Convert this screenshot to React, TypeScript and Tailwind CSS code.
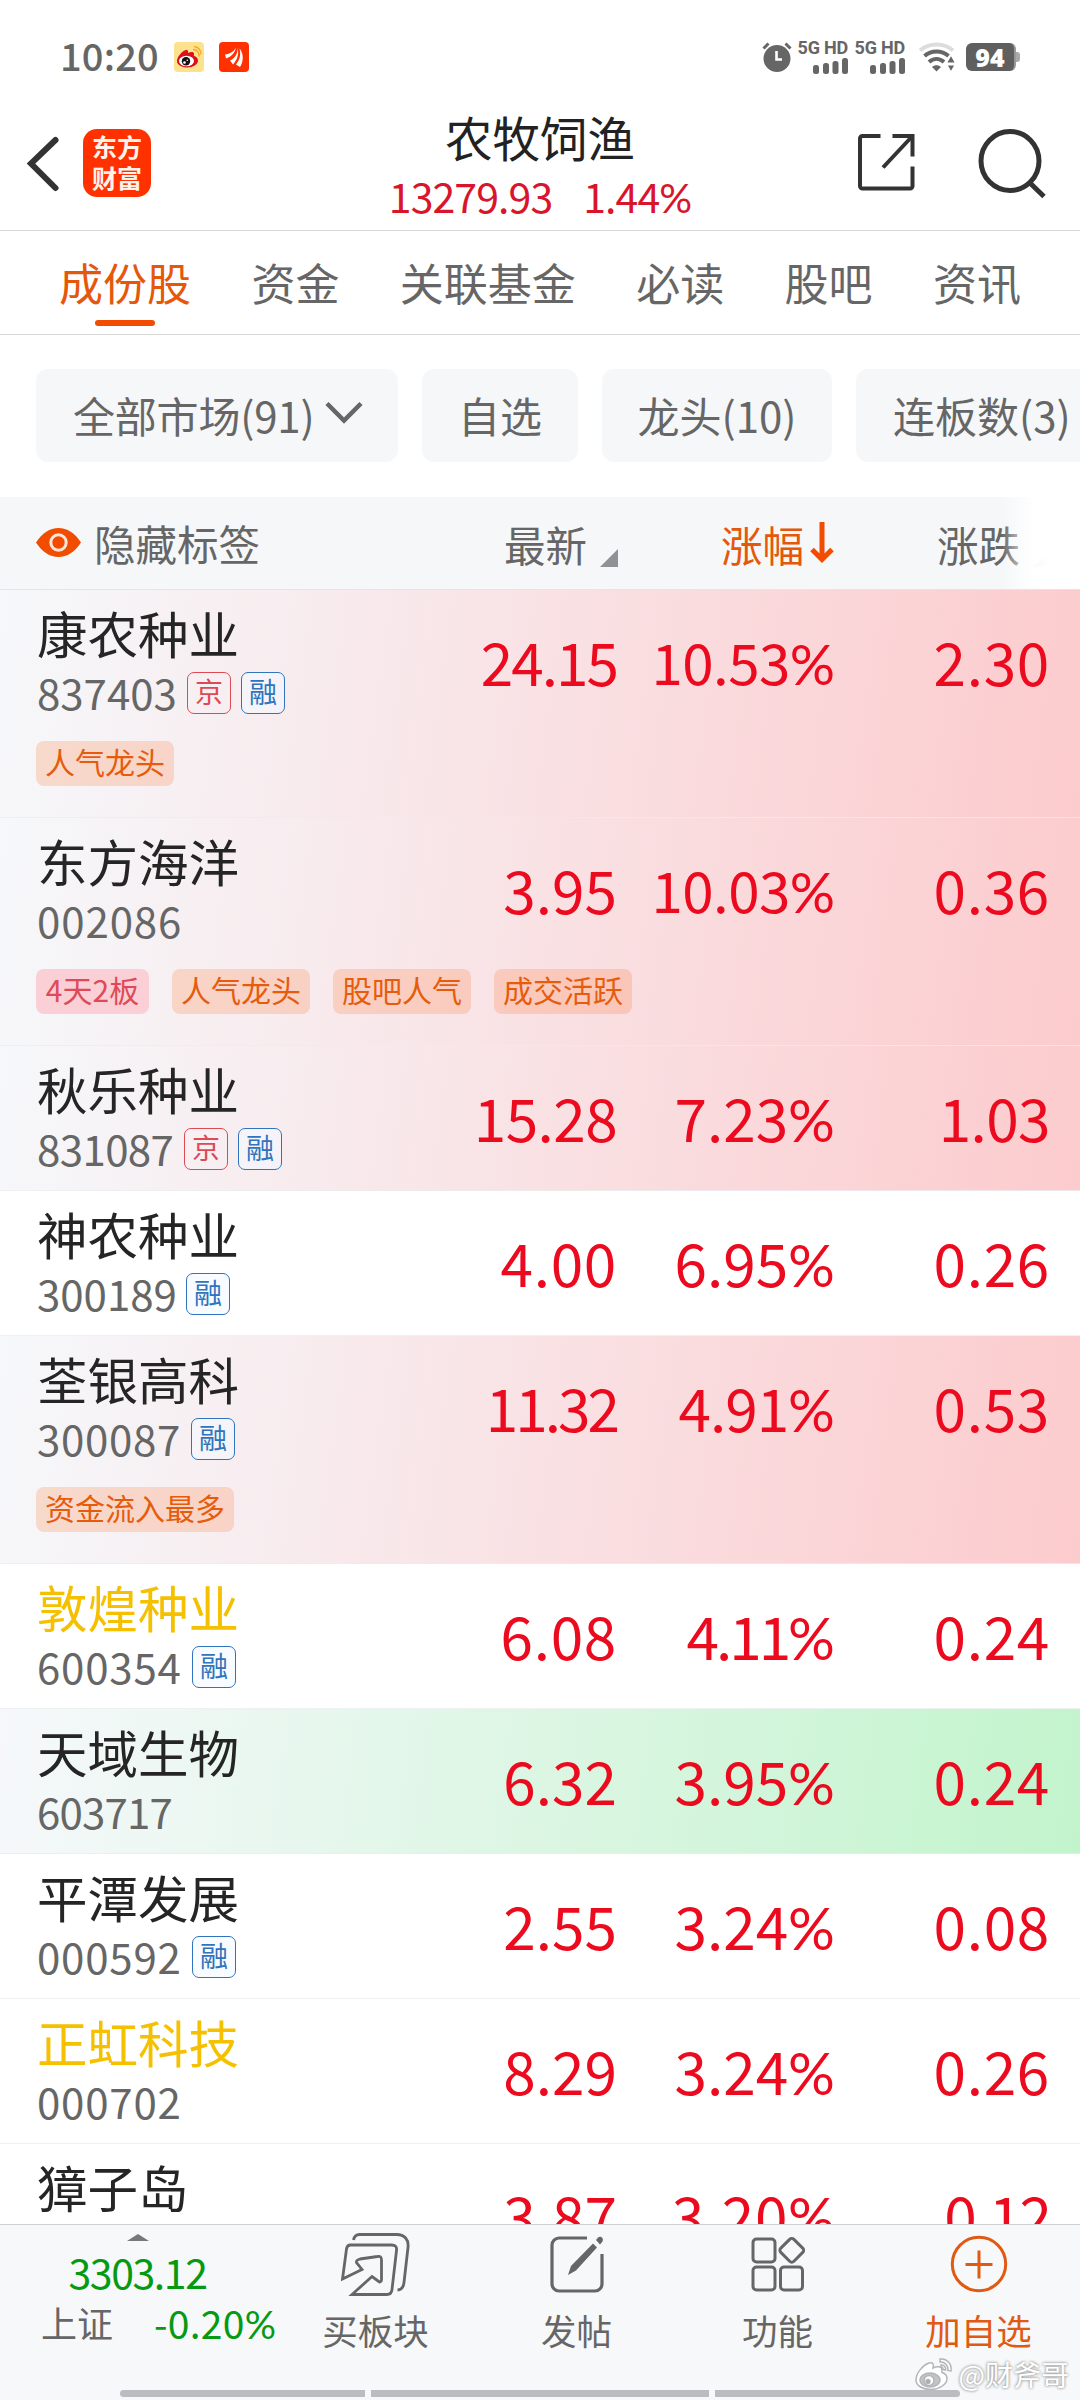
import React from 'react';

type Stock = {
  name: string;
  code: string;
  codeClass: string;
  badges?: string[];
  tags?: string[];
  price: string;
  percent: string;
  change: string;
  bg?: string;
  gold?: boolean;
};

const RED_BG = 'bg-[linear-gradient(98deg,#f6f8fb_0%,#fccbcd_100%)]';
const GREEN_BG = 'bg-[linear-gradient(98deg,#f6f8fb_0%,#c2f4cc_100%)]';

const stocks: Stock[] = [
  { name: '康农种业', code: '837403', codeClass: 'w-[150px]', badges: ['京', '融'], tags: ['人气龙头'], price: '24.15', percent: '10.53', change: '2.30', bg: RED_BG },
  { name: '东方海洋', code: '002086', codeClass: 'w-[150px] tracking-[0.9px]', tags: ['4天2板', '人气龙头', '股吧人气', '成交活跃'], price: '3.95', percent: '10.03', change: '0.36', bg: RED_BG },
  { name: '秋乐种业', code: '831087', codeClass: 'w-[147px] tracking-[-0.6px]', badges: ['京', '融'], price: '15.28', percent: '7.23', change: '1.03', bg: RED_BG },
  { name: '神农种业', code: '300189', codeClass: 'w-[149px]', badges: ['融'], price: '4.00', percent: '6.95', change: '0.26' },
  { name: '荃银高科', code: '300087', codeClass: 'w-[154px] tracking-[0.7px]', badges: ['融'], tags: ['资金流入最多'], price: '11.32', percent: '4.91', change: '0.53', bg: RED_BG },
  { name: '敦煌种业', code: '600354', codeClass: 'w-[155px] tracking-[0.8px]', badges: ['融'], price: '6.08', percent: '4.11', change: '0.24', gold: true },
  { name: '天域生物', code: '603717', codeClass: 'w-[150px] tracking-[-0.8px]', price: '6.32', percent: '3.95', change: '0.24', bg: GREEN_BG },
  { name: '平潭发展', code: '000592', codeClass: 'w-[155px] tracking-[0.8px]', badges: ['融'], price: '2.55', percent: '3.24', change: '0.08' },
  { name: '正虹科技', code: '000702', codeClass: 'w-[155px] tracking-[0.8px]', price: '8.29', percent: '3.24', change: '0.26', gold: true },
  { name: '獐子岛', code: '002069', codeClass: 'w-[155px]', price: '3.87', percent: '3.20', change: '0.12' },
];

// ones are set tighter than the other digits
const tracking = (value: string) => {
  if (value.includes('11')) return 'tracking-[-3px]';
  if (value.includes('.1')) return 'tracking-[-2px]';
  if (value.startsWith('1')) return 'tracking-[-0.6px]';
  if (value.includes('1')) return 'tracking-[-1px]';
  if (value.includes('0')) return 'tracking-[0.7px]';
  return 'tracking-normal';
};

const SignalIcon = () => (
  <div className="flex w-[48px] flex-col items-end">
    <span className="h-[15px] text-[18px] leading-[15px] font-bold whitespace-nowrap font-['Roboto','Noto_Sans_CJK_SC',sans-serif] tracking-[-0.2px]">5G HD</span>
    <svg width="35" height="16" viewBox="0 0 35 16" className="mt-[3px]" fill="#666">
      <rect x="0" y="7" width="6" height="9" rx="2.5" />
      <rect x="10" y="5" width="6" height="11" rx="2.5" />
      <rect x="19.5" y="3" width="6" height="13" rx="2.5" />
      <rect x="29" y="0" width="6" height="16" rx="2.5" />
    </svg>
  </div>
);

const StatusBar = () => (
  <div className="flex h-[104px] items-center pt-[10px] pl-[60px] text-[#666]">
    <span className="w-[114px] text-[38px] font-medium leading-[50px] tracking-[0.2px] -mt-[5px]">10:20</span>
    <svg width="30" height="30" viewBox="0 0 30 30">
      <rect width="30" height="30" rx="4" fill="#fde28d" />
      <path d="M19 7.500a6 6 0 0 1 6 7M20 4.500a7.500 7.500 0 0 1 7 8" fill="none" stroke="#f3ac2b" strokeWidth="1.500" />
      <path d="M3 19c0-4 5-10 9-11 2-.5 2.500 1 2 3 3-1.500 6-1.500 6 1 0 1-.3 1.500 0 2 2 .6 4 1.800 4 4.500 0 4-5 7-10.500 7S3 23 3 19Z" fill="#dd0f1c" />
      <ellipse cx="12.500" cy="19" rx="7.500" ry="5.300" fill="#fff" />
      <circle cx="12" cy="19.200" r="4.200" fill="#111" />
      <circle cx="10.500" cy="20.500" r="1.300" fill="#fff" />
      <circle cx="13.300" cy="18.300" r=".8" fill="#fff" />
    </svg>
    <svg width="30" height="30" viewBox="0 0 30 30" className="ml-[15px]">
      <rect width="30" height="30" rx="4" fill="#ff3100" />
      <path d="M17 5.500c-2 4-6 6.500-11 7l1 4C12 15 16 11 17 5.500Z" fill="#fff" />
      <path d="M18.500 6c.5 6-3 10.500-7.500 12.500l3 4C18 18 20.500 12 18.500 6Z" fill="#fff" />
      <path d="M20.500 6.500c1.500 6 .5 11-3.500 16l4 2.500C25 19 24.500 11 20.500 6.500Z" fill="#fff" />
    </svg>

    <svg width="30" height="30" viewBox="0 0 30 30" className="ml-[513px]">
      <circle cx="15" cy="16.500" r="13.500" fill="#666" />
      <path d="M1.500 6.500 6.500 1.500M28.500 6.500l-5-5" stroke="#666" strokeWidth="3" />
      <path d="M14.500 9v8.500H20" fill="none" stroke="#fff" strokeWidth="2.600" />
    </svg>
    <div className="ml-[8px] flex gap-[9px]">
      <SignalIcon />
      <SignalIcon />
    </div>
    <svg width="38" height="30" viewBox="0 0 38 30" className="ml-[13px]" fill="none" strokeWidth="4">
      <path d="M2 8.500c9-8 24-8 33 0" stroke="#dcdcdc" />
      <path d="M6.500 14c7-6 17-6 24 0M11 20c4.500-4 10.500-4 15 0" stroke="#666" />
      <path d="M14 25c2.500-2.500 6.500-2.500 9 0l-4.500 4.500Z" fill="#666" />
      <path d="m33 13-4.500 8h9Zm0 17-4-7h8Z" fill="#666" stroke="#fff" strokeWidth="1.200" />
    </svg>
    <div className="ml-[10px] flex h-[28px] w-[50px] items-center justify-center rounded-[6px] border-r-2 border-[#999] bg-[#5f5f5f] font-['Open_Sans','Noto_Sans_CJK_SC',sans-serif] text-[25px] leading-[28px] font-extrabold text-white">
      94
    </div>
    <div className="h-[10px] w-[4px] rounded-r-[3px] bg-[#aaa]"></div>
  </div>
);

const Header = () => (
  <div className="flex h-[127px] border-b border-[#d6d6d6]">
    <div className="flex w-[300px] pl-[26px]">
      <svg width="34" height="58" viewBox="0 0 34 58" className="mt-[31px]" fill="none" stroke="#333" strokeWidth="6" strokeLinecap="round">
        <path d="M29.500 5 5 28.500 29.500 53" strokeLinejoin="miter" />
      </svg>
      <div className="mt-[25px] ml-[23px] flex h-[68px] w-[68px] flex-col items-center rounded-[14px] bg-[#ff3100] pt-[2px] text-[25px] leading-[31px] font-bold text-[#fff3ea]">
        <span>东方</span>
        <span>财富</span>
      </div>
    </div>
    <div className="flex flex-1 flex-col items-center pt-[5px]">
      <h1 className="h-[56px] text-[47.500px] leading-[56px] text-[#222]">农牧饲渔</h1>
      <div className="mt-[6px] flex h-[48px] gap-[31px] text-[41px] leading-[48px] tracking-[-0.9px] whitespace-nowrap text-[#d8152b]">
        <span>13279.93</span>
        <Percent value="1.44" />
      </div>
    </div>
    <div className="flex w-[300px] justify-end pr-[31px]">
      <svg width="60" height="60" viewBox="0 0 60 60" className="mt-[28px]" fill="none" stroke="#333" strokeWidth="4">
        <path d="M24.500 4H6.500a2.500 2.500 0 0 0-2.500 2.500V54a2.500 2.500 0 0 0 2.500 2.500H54a2.500 2.500 0 0 0 2.500-2.500V34.500M36.500 4h20v20.500" />
        <path d="M56.500 4 27 35.500" />
      </svg>
      <svg width="72" height="72" viewBox="0 0 72 72" className="ml-[61px] mt-[24px]" fill="none" stroke="#333" strokeWidth="5">
        <ellipse cx="33" cy="33" rx="29" ry="29.500" />
        <path d="M52.500 54.500 67 68.500" />
      </svg>
    </div>
  </div>
);

const Percent = ({ value }: { value: string }) => (
  <span>
    {value}
    <span className="font-['Lato',sans-serif] tracking-[-1px]">%</span>
  </span>
);

const tabs = ['成份股', '资金', '关联基金', '必读', '股吧', '资讯'];

const Tabs = () => (
  <div className="flex h-[104px] gap-[60.4px] border-b border-[#d6d6d6] pt-[13px] pl-[59px] text-[44px] leading-[76px] text-[#666]">
    {tabs.map((tab, i) => (
      <div key={tab} className={i === 0 ? 'flex flex-col items-center text-[#e5570b]' : 'flex flex-col items-center'}>
        <span className="h-[76px] whitespace-nowrap">{tab}</span>
        {i === 0 && <div className="h-[6px] w-[60px] rounded-full bg-[#f24c00]"></div>}
      </div>
    ))}
  </div>
);

const Filters = () => (
  <div className="flex h-[162px] gap-[24px] overflow-hidden pt-[34px] pl-[36px] text-[42px] leading-[92px] whitespace-nowrap text-[#666]">
    <div className="flex h-[93px] w-[362px] shrink-0 items-center rounded-[12px] bg-[#f6f7f9] pl-[37px]">
      <span className="-mt-[1px] tracking-[-0.2px]">全部市场(91)</span>
      <svg width="38" height="24" viewBox="0 0 38 24" className="ml-[11px] -mt-[5px]" fill="none" stroke="#666" strokeWidth="4.500">
        <path d="M2 2.500 19 19.500 36 2.500" />
      </svg>
    </div>
    <div className="h-[93px] w-[156px] shrink-0 rounded-[12px] bg-[#f6f7f9] text-center">自选</div>
    <div className="h-[93px] w-[230px] shrink-0 rounded-[12px] bg-[#f6f7f9] text-center">龙头(10)</div>
    <div className="h-[93px] w-[260px] shrink-0 rounded-[12px] bg-[#f6f7f9] pl-[37px]">连板数(3)</div>
  </div>
);

const TableHead = () => (
  <div className="relative flex h-[93px] items-center border-b border-[#e3e5e8] bg-[#f5f7f9] pl-[36px] text-[41.5px] leading-[60px] text-[#666]">
    <svg width="45" height="29" viewBox="0 0 45 29" className="-mt-[2px]">
      <path d="M0 14.500C6 5 14 0 22.500 0S39 5 45 14.500C39 24 31 29 22.500 29S6 24 0 14.500Z" fill="#f24c00" />
      <circle cx="22.500" cy="14.500" r="7.700" fill="none" stroke="#fbe6d9" strokeWidth="3" />
    </svg>
    <span className="ml-[13px] w-[410px]">隐藏标签</span>
    <span className="mt-[2px] w-[96px]">最新</span>
    <svg width="18" height="18" viewBox="0 0 18 18" className="mt-[30px]">
      <path d="M18 0v18H0Z" fill="#8f9194" />
    </svg>
    <span className="mt-[2px] ml-[103px] text-[#e5570b]">涨幅</span>
    <svg width="24" height="42" viewBox="0 0 24 42" className="ml-[6px]" fill="none" stroke="#f24c00" strokeWidth="5">
      <path d="M12 0v38M2 27.500l10 10 10-10" />
    </svg>
    <span className="mt-[2px] ml-[103px]">涨跌</span>
    <svg width="18" height="18" viewBox="0 0 18 18" className="mt-[30px] ml-[14px] shrink-0">
      <path d="M18 0v18H0Z" fill="#8f9194" />
    </svg>
    <div className="absolute top-0 right-0 h-[92px] w-[78px] bg-[linear-gradient(90deg,rgba(255,255,255,0),rgba(255,255,255,0.95)_40%,#fff_60%)]"></div>
  </div>
);

const Badge = ({ text }: { text: string }) => (
  <span
    className={
      text === '京'
        ? 'mr-[10px] h-[42px] w-[44px] rounded-[7px] border border-[#dc4a55] text-center text-[28px] leading-[37px] text-[#dc4a55]'
        : 'mr-[10px] h-[42px] w-[44px] rounded-[7px] border border-[#2f74bd] bg-[#f3f8ff]/60 text-center text-[28px] leading-[37px] text-[#2f74bd]'
    }
  >
    {text}
  </span>
);

const Tag = ({ text }: { text: string }) => (
  <span
    className={
      text === '4天2板'
        ? 'h-[45px] w-[113px] rounded-[8px] bg-[#fad0d6] text-center text-[30px] leading-[41px] text-[#e04a58]'
        : 'h-[45px] rounded-[8px] bg-[#ff6a1e]/20 px-[9px] text-[30px] leading-[41px] text-[#e65c0c]'
    }
  >
    {text}
  </span>
);

const StockRow = ({ stock }: { stock: Stock }) => (
  <div className={`${stock.tags ? 'h-[228px]' : 'h-[145px]'} ${stock.bg ?? 'bg-white'} shrink-0 border-b border-[#ebecee]/80`}>
    <div className="flex h-[145px] pl-[37px]">
      <div className="w-[280px] pt-[12px]">
        <div className={`h-[60px] text-[50.5px] leading-[60px] whitespace-nowrap ${stock.gold ? 'text-[#f5c000]' : 'text-[#252525]'}`}>{stock.name}</div>
        <div className="mt-[10px] flex h-[42px] items-center">
          <span className={`text-[42px] leading-[42px] -mt-[3px] text-[#666] ${stock.codeClass}`}>{stock.code}</span>
          {stock.badges?.map((b) => <Badge key={b} text={b} />)}
        </div>
      </div>
      <div className="flex text-right text-[58.5px] leading-[141px] whitespace-nowrap text-[#ec0a1e]">
        <div className={`w-[300px] ${tracking(stock.price)}`}>{stock.price}</div>
        <div className={`w-[217px] ${stock.percent.length > 4 ? 'text-[56.5px]' : ''} ${tracking(stock.percent)}`}>
          <Percent value={stock.percent} />
        </div>
        <div className={`w-[216px] ${tracking(stock.change)}`}>{stock.change}</div>
      </div>
    </div>
    {stock.tags && (
      <div className="mt-[6px] flex gap-[23px] pl-[36px]">
        {stock.tags.map((t) => <Tag key={t} text={t} />)}
      </div>
    )}
  </div>
);

const BoardIcon = () => (
  <svg width="70" height="64" viewBox="0 0 70 64" fill="none" stroke="#666" strokeWidth="2.800">
    <path d="M12.500 8c.8-4 2.500-5.500 6-5.500h37c8 0 12.500 5 11.500 13l-4 35c-.6 5-3 7.500-6.500 7.500" />
    <path d="M1.500 47 5.500 17c.4-3 1.500-4 4-4h41c4 0 5.500 2 5 5.500l-4.500 39c-.4 3.500-2 5-5 5H11L31 44.500l7.500 5.500c2 0 2-1 2-3V28c0-3-1-4-4-3.500l-17.500 2.500c-2.500.5-4 2-3.500 3.500l5.500 7Z" />
  </svg>
);

const PostIcon = () => (
  <svg width="56" height="58" viewBox="0 0 56 58">
    <path d="M38 3H10a7 7 0 0 0-7 7v39a7 7 0 0 0 7 7h36a7 7 0 0 0 7-7V19" fill="none" stroke="#666" strokeWidth="3.200" />
    <path d="m44 8.500 4 4L27 35.500l-8 4.500 3-9ZM47 5l2-2.500c3-2 6 1 4.500 4L51 9.500Z" fill="#666" />
  </svg>
);

const FunctionIcon = () => (
  <svg width="54" height="56" viewBox="0 0 54 56" fill="none" stroke="#666" strokeWidth="3">
    <rect x="2" y="3" width="22" height="23" rx="3.500" />
    <rect x="2" y="31" width="22" height="23" rx="3.500" />
    <rect x="29.500" y="31" width="22" height="23" rx="3.500" />
    <rect x="31.500" y="5" width="18.500" height="18.500" rx="3" transform="rotate(45 40.700 14.300)" />
  </svg>
);

const AddIcon = () => (
  <svg width="58" height="58" viewBox="0 0 58 58" fill="none" stroke="#e05a12" strokeWidth="3">
    <circle cx="29" cy="29" r="26.700" />
    <path d="M29 15.500v28M15.500 29.500h27" />
  </svg>
);

const actions = [
  { label: '买板块', icon: <BoardIcon /> },
  { label: '发帖', icon: <PostIcon /> },
  { label: '功能', icon: <FunctionIcon /> },
  { label: '加自选', icon: <AddIcon />, active: true },
];

const BottomBar = () => (
  <div className="relative flex h-[176px] flex-col border-t border-[#cfd0d2] bg-[#f6f8fa]">
    <div className="flex h-[165px]">
      <div className="flex w-[275px] flex-col items-center text-[#059a12]">
        <svg width="22" height="7" viewBox="0 0 22 7" className="mt-[9px]">
          <path d="M0 7 11 0l11 7Z" fill="#77787a" />
        </svg>
        <div className="mt-[6px] h-[48px] text-[41px] leading-[48px] tracking-[-1.400px]">3303.12</div>
        <div className="mt-[4px] flex h-[46px] w-full justify-between pl-[41px] leading-[46px]">
          <span className="text-[36px] text-[#666]">上证</span>
          <span className="text-[39px] tracking-[0.3px]"><Percent value="-0.20" /></span>
        </div>
      </div>
      {actions.map((a) => (
        <div key={a.label} className="flex w-[201px] flex-col items-center">
          <div className="flex h-[78px] items-center justify-center">{a.icon}</div>
          <span className={`text-[35.500px] leading-[53px] ${a.active ? 'text-[#e05a12]' : 'text-[#666]'}`}>{a.label}</span>
        </div>
      ))}
    </div>
    <div className="flex gap-[6px] pl-[120px]">
      <div className="h-[7px] w-[245px] rounded-l-full bg-[#bbbcbf]"></div>
      <div className="h-[7px] w-[338px] bg-[#bbbcbf]"></div>
      <div className="h-[7px] w-[245px] rounded-r-full bg-[#bbbcbf]"></div>
    </div>
    <div className="absolute right-[11px] bottom-[5px] flex items-center text-[28px] leading-[42px] text-white [text-shadow:0_0_3px_#999,0_0_3px_#aaa]">
      <svg width="40" height="34" viewBox="0 0 40 34" className="mr-[5px]" fill="#fff" stroke="#b4b5b8" strokeWidth="1.500">
        <path d="M2 23C2 16 9 8 15 6c4-1 5 1 4 5 4-2 9-2 9 2 0 1-.5 2 0 2.500 3 1 5 2.500 5 6 0 6-8 11-16 11S2 29 2 23Z" />
        <ellipse cx="16" cy="23" rx="10" ry="7" fill="#c3c4c7" />
        <circle cx="15" cy="23.500" r="5" fill="#fff" />
        <circle cx="14" cy="24.500" r="2" fill="#aaa" />
        <path d="M26 2c7-1 12 5 11 12l-3-.5c.5-5-3-9-8-8.500ZM27 8c3-.5 5 2 4.500 5l-2.500-.5c.3-1.500-.5-2.500-2-2.500Z" />
      </svg>
      @财斧哥
    </div>
  </div>
);

export default function App() {
  return (
    <div className="h-[2400px] w-[1080px] overflow-hidden bg-white font-['Noto_Sans_CJK_SC',sans-serif]">
      <StatusBar />
      <Header />
      <Tabs />
      <Filters />
      <TableHead />
      <div className="flex h-[1634px] flex-col overflow-hidden">
        {stocks.map((s) => <StockRow key={s.code} stock={s} />)}
      </div>
      <BottomBar />
    </div>
  );
}
